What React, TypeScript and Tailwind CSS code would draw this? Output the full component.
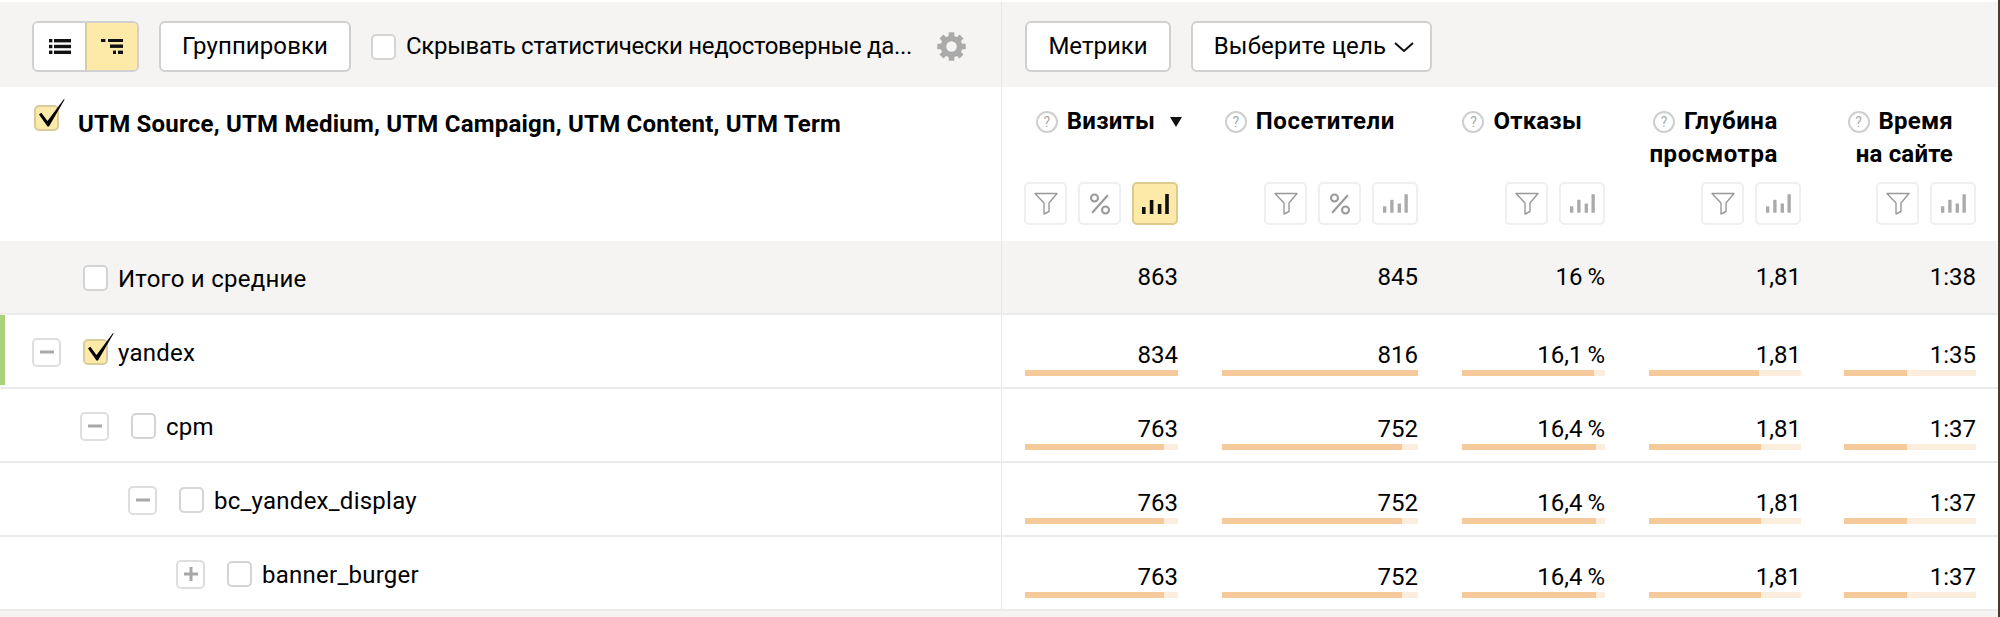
const rowGrid = "grid grid-cols-[1002px_198px_240px_187px_196px_175px]";
const pads = [
  "pl-[23px] pr-[22px]",
  "pl-[22px] pr-[22px]",
  "pl-[22px] pr-[22px]",
  "pl-[22px] pr-[22px]",
  "pl-[21px] pr-[22px]",
];
const toolbarBtn =
  "h-[51px] pb-[2px] rounded-[6px] border-2 border-[#d0d0d0] bg-white text-[24px] text-black flex items-center justify-center";

function Check() {
  return (
    <svg viewBox="0 0 32 28" className="absolute left-[-2px] top-[-8px] w-[32px] h-[28px] overflow-visible">
      <path d="M5 15.5 L7.3 13.8 L13.5 22 L30 0 L30.6 .5 L15 27.5 L13.5 27.5 Z" fill="#000" />
    </svg>
  );
}

function Checkbox({ checked }: { checked?: boolean }) {
  return (
    <span
      className={
        "relative block shrink-0 w-[25px] h-[26px] rounded-[5px] border-2 " +
        (checked ? "bg-[#fdeaa8] border-[#d9cb9b]" : "bg-white border-[#d4d4d4]")
      }
    >
      {checked && <Check />}
    </span>
  );
}

function Expander({ kind }: { kind: "minus" | "plus" }) {
  return (
    <span className="flex shrink-0 items-center justify-center w-[29px] h-[29px] rounded-[5px] border-2 border-[#dedede] bg-white">
      <svg viewBox="0 0 14 14" className="w-[14px] h-[14px]">
        <rect x="0" y="5.5" width="14" height="3" fill="#a8a8a8" />
        {kind === "plus" && <rect x="5.5" y="0" width="3" height="14" fill="#a8a8a8" />}
      </svg>
    </span>
  );
}

function HelpIcon() {
  return (
    <span className="flex shrink-0 items-center justify-center w-[22px] h-[22px] rounded-full border-2 border-[#cfcfcf] text-[14px] font-normal tracking-normal leading-none text-[#aaa]">
      ?
    </span>
  );
}

function IconBtn({ active, wide, children }: { active?: boolean; wide?: boolean; children: React.ReactNode }) {
  return (
    <span
      className={
        "flex items-center justify-center h-[43px] rounded-[5px] border-2 " +
        (wide ? "w-[46px] " : "w-[43px] ") +
        (active ? "bg-[#fdeaa8] border-[#dccb8e]" : "bg-white border-[#efefef]")
      }
    >
      {children}
    </span>
  );
}

function GearIcon() {
  return (
    <svg viewBox="-14.5 -14.5 29 29" className="ml-[25px] w-[29px] h-[29px] shrink-0" fill="#aaa">
      {[0, 45, 90, 135, 180, 225, 270, 315].map((a) => (
        <rect key={a} x="-2.8" y="-14.2" width="5.6" height="7" transform={`rotate(${a})`} />
      ))}
      <circle r="10.8" />
      <circle r="5.3" fill="#f5f4f2" />
    </svg>
  );
}

function FunnelIcon() {
  return (
    <svg viewBox="0 0 24 23" className="w-[24px] h-[23px]" fill="none" stroke="#999" strokeWidth="1.4" strokeLinejoin="round">
      <path d="M1 1.5 H23 L15 11 V19.5 L10 22 V11 Z" />
    </svg>
  );
}

function PercentIcon() {
  return (
    <svg viewBox="0 0 24 24" className="w-[22px] h-[22px]" fill="none" stroke="#999" strokeWidth="2.2">
      <circle cx="6" cy="5.5" r="3.8" />
      <circle cx="18" cy="18.5" r="3.8" />
      <path d="M20.5 2.5 L3.5 21.5" />
    </svg>
  );
}

function BarsIcon({ active }: { active?: boolean }) {
  const fill = active ? "#111" : "#aaa";
  return (
    <svg viewBox="0 0 27 20" className={active ? "w-[27px] h-[20px]" : "w-[25px] h-[19px]"} fill={fill}>
      <rect x="0" y="13" width="3.6" height="7" />
      <rect x="7.8" y="6" width="3.6" height="14" />
      <rect x="15.8" y="10" width="3.6" height="10" />
      <rect x="23.2" y="0" width="3.6" height="20" />
    </svg>
  );
}

function ListIcon() {
  return (
    <svg viewBox="0 0 22 15" className="w-[22px] h-[15px]" fill="#111">
      <rect x="0" y="0" width="3.4" height="3.4" />
      <rect x="5" y="0" width="17" height="3.4" />
      <rect x="0" y="5.8" width="3.4" height="3.4" />
      <rect x="5" y="5.8" width="17" height="3.4" />
      <rect x="0" y="11.6" width="3.4" height="3.4" />
      <rect x="5" y="11.6" width="17" height="3.4" />
    </svg>
  );
}

function TreeIcon() {
  return (
    <svg viewBox="0 0 22 15" className="w-[22px] h-[15px]" fill="#111">
      <rect x="0" y="0" width="4.4" height="3" />
      <rect x="7" y="0" width="15" height="3" />
      <rect x="9" y="5.5" width="13" height="3.4" />
      <rect x="12" y="11.6" width="3" height="3.4" />
      <rect x="17" y="11.6" width="5" height="3.4" />
    </svg>
  );
}

const headers = [
  { lines: ["Визиты"], sorted: true, percent: true, active: true },
  { lines: ["Посетители"], percent: true, wider: true },
  { lines: ["Отказы"] },
  { lines: ["Глубина", "просмотра"], wider: true },
  { lines: ["Время", "на сайте"] },
];

function MetricHeader({ lines, sorted, percent, active, wider, pad }: { lines: string[]; sorted?: boolean; percent?: boolean; active?: boolean; wider?: boolean; pad: string }) {
  return (
    <div className={pad + " flex flex-col items-end pt-[18px]"}>
      <div
        className={
          "h-[77px] pr-[23px] text-[24px] leading-[33px] font-bold text-black text-right " +
          (wider ? "tracking-[0.6px]" : "tracking-[0.2px]")
        }
      >
        <div className="flex items-center justify-end gap-[9px] relative">
          <HelpIcon />
          <span>{lines[0]}</span>
          {sorted && (
            <svg viewBox="0 0 12 10" className="absolute right-[-27px] top-[12px] w-[12px] h-[10px]">
              <path d="M0 0 H12 L6 10 Z" fill="#111" />
            </svg>
          )}
        </div>
        {lines[1] && <div>{lines[1]}</div>}
      </div>
      <div className="flex gap-[11px]">
        <IconBtn>
          <FunnelIcon />
        </IconBtn>
        {percent && (
          <IconBtn>
            <PercentIcon />
          </IconBtn>
        )}
        <IconBtn wide active={active}>
          <BarsIcon active={active} />
        </IconBtn>
      </div>
    </div>
  );
}

const rows = [
  { level: 0, kind: "minus" as const, checked: true, label: "yandex", values: ["834", "816", "16,1\u2009%", "1,81", "1:35"], fills: [100, 100, 92, 72.5, 47.5] },
  { level: 1, kind: "minus" as const, label: "cpm", values: ["763", "752", "16,4\u2009%", "1,81", "1:37"], fills: [91, 92, 94, 73.7, 48] },
  { level: 2, kind: "minus" as const, label: "bc_yandex_display", values: ["763", "752", "16,4\u2009%", "1,81", "1:37"], fills: [91, 92, 94, 73.7, 48] },
  { level: 3, kind: "plus" as const, label: "banner_burger", values: ["763", "752", "16,4\u2009%", "1,81", "1:37"], fills: [91, 92, 94, 73.7, 48] },
];
const indents = ["pl-[32px]", "pl-[80px]", "pl-[128px]", "pl-[176px]"];

export default function App() {
  return (
    <div className="flex w-[2000px] h-[617px] overflow-hidden text-black font-['Roboto','Liberation_Sans',sans-serif]">
      <div className="w-[1998px] bg-[#f5f4f2]">
        <div className="h-[2px] bg-white" />
        {/* Toolbar */}
        <div className="flex h-[85px] bg-[#f5f4f2]">
          <div className="w-[1002px] flex items-start gap-[20px] pl-[32px] pt-[19px] border-r border-[#e6e6e6]">
            <div className="flex h-[51px] w-[107px] overflow-hidden rounded-[6px] border-2 border-[#d0d0d0]">
              <span className="flex w-[51px] items-center justify-center bg-white">
                <ListIcon />
              </span>
              <span className="flex flex-1 items-center justify-center bg-[#fdeaa8] border-l-2 border-[#d9cb9b]">
                <TreeIcon />
              </span>
            </div>
            <button className={toolbarBtn + " w-[192px] tracking-[0.1px]"}>Группировки</button>
            <div className="flex h-[51px] items-center">
              <Checkbox />
              <span className="ml-[10px] w-[506px] pb-[1px] whitespace-nowrap text-[24px] tracking-[-0.3px]">
                Скрывать статистически недостоверные да...
              </span>
              <GearIcon />
            </div>
          </div>
          <div className="flex flex-1 items-start gap-[20px] pl-[23px] pt-[19px]">
            <button className={toolbarBtn + " w-[146px]"}>Метрики</button>
            <button className={toolbarBtn + " w-[241px] gap-[8px] pl-[5px] tracking-[0.2px]"}>
              Выберите цель
              <svg viewBox="0 0 20 10" className="w-[20px] h-[10px] mt-[2px]" fill="none" stroke="#111" strokeWidth="2">
                <path d="M1 1 L10 9 L19 1" />
              </svg>
            </button>
          </div>
        </div>

        {/* Table header */}
        <div className={rowGrid + " h-[154px] bg-white"}>
          <div className="flex items-start gap-[19px] pl-[34px] pt-[18px] border-r border-[#e6e6e6]">
            <Checkbox checked />
            <span className="pt-[3px] text-[24px] leading-[33px] font-bold tracking-[0.22px]">
              UTM Source, UTM Medium, UTM Campaign, UTM Content, UTM Term
            </span>
          </div>
          {headers.map((h, i) => (
            <MetricHeader key={h.lines[0]} {...h} pad={pads[i]} />
          ))}
        </div>

        {/* Totals */}
        <div className={rowGrid + " h-[74px] bg-[#f5f4f2] border-b-2 border-[#ebebeb]"}>
          <div className="flex items-center gap-[10px] pl-[83px] pt-[2px] border-r border-[#e6e6e6]">
            <Checkbox />
            <span className="pt-[1px] text-[24px] tracking-[0.25px]">Итого и средние</span>
          </div>
          {["863", "845", "16\u2009%", "1,81", "1:38"].map((v, i) => (
            <div key={v} className={pads[i] + " pt-[21px] text-right text-[24px] leading-[30px]"}>
              {v}
            </div>
          ))}
        </div>

        {/* Rows */}
        {rows.map((r) => (
          <div key={r.label} className={rowGrid + " h-[74px] bg-white border-b-2 border-[#ebebeb]"}>
            <div className="relative flex border-r border-[#e6e6e6]">
              {r.level === 0 && <span className="absolute left-0 top-0 h-[70px] w-[5px] bg-[#a9d27a]" />}
              <div className={indents[r.level] + " flex items-center pt-[2px]"}>
                <Expander kind={r.kind} />
                <span className="ml-[22px]">
                  <Checkbox checked={r.checked} />
                </span>
                <span className="ml-[10px] pt-[1px] text-[24px] tracking-[0.25px]">{r.label}</span>
              </div>
            </div>
            {r.values.map((v, i) => (
              <div key={i} className={pads[i] + " pt-[25px]"}>
                <div className="text-right text-[24px] leading-[30px]">{v}</div>
                <div className="h-[6px] bg-[#fbeedd]">
                  <div className="h-full bg-[#f5c99a]" style={{ width: `${r.fills[i]}%` }} />
                </div>
              </div>
            ))}
          </div>
        ))}
      </div>
      <div className="w-[2px] bg-[#4a3b31]" />
    </div>
  );
}
